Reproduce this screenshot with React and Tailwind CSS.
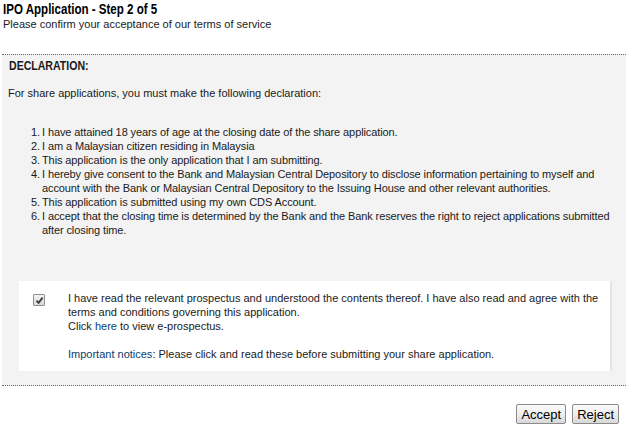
import React from "react";

const items = [
  "I have attained 18 years of age at the closing date of the share application.",
  "I am a Malaysian citizen residing in Malaysia",
  "This application is the only application that I am submitting.",
  "I hereby give consent to the Bank and Malaysian Central Depository to disclose information pertaining to myself and account with the Bank or Malaysian Central Depository to the Issuing House and other relevant authorities.",
  "This application is submitted using my own CDS Account.",
  "I accept that the closing time is determined by the Bank and the Bank reserves the right to reject applications submitted after closing time.",
];

const sans = "font-['Liberation_Sans',Arial,sans-serif]";

function CheckBox() {
  return (
    <div className="w-[12px] h-[12px] border border-[#8f8f8f] rounded-[1px] bg-gradient-to-b from-[#f4f4f4] to-[#d9d9d9] flex items-center justify-center">
      <svg width="9" height="9" viewBox="0 0 9 9">
        <path d="M1.5 4.6 L3.6 6.8 L7.6 1.6" fill="none" stroke="#3a3a3a" strokeWidth="1.8" />
      </svg>
    </div>
  );
}

function Btn({ children }) {
  return (
    <button
      type="button"
      className={`h-[20px] px-[4px] text-[13px] leading-none text-black border border-[#8a8a8a] rounded-[2px] bg-gradient-to-b from-[#fbfbfb] via-[#eeeeee] to-[#d8d8d8] ${sans}`}
    >
      {children}
    </button>
  );
}

export default function App() {
  return (
    <div className={`w-[626px] h-[429px] bg-white text-[#1a1a1a] text-[11px] leading-[14px] ${sans}`}>
      <div className="px-[3px] pt-[1px]">
        {/* narrow bold title */}
        <div className="text-[15px] leading-[15px] font-bold text-black">
          <span className="inline-block origin-left scale-x-[0.77]">IPO Application - Step 2 of 5</span>
        </div>
        <div className="mt-[1px]">Please confirm your acceptance of our terms of service</div>
      </div>

      <div className="mt-[23px] ml-[2px] border-t border-b border-dotted border-[#666] bg-[#f3f3f3] pt-[4px] pb-[14px]">
        <div className="pl-[7px] text-[12px] leading-[14px] font-bold">
          <span className="inline-block origin-left scale-x-[0.88]">DECLARATION:</span>
        </div>
        <div className="pl-[6px] mt-[13px]">
          For share applications, you must make the following declaration:
        </div>

        <ol className="mt-[25px] pl-[29px] pr-[6px] tracking-[-0.1px]">
          {items.map((t, i) => (
            <li key={i} className="flex">
              <span className="w-[11px] shrink-0">{i + 1}.</span>
              <span>{t}</span>
            </li>
          ))}
        </ol>

        <div className="mt-[44px] ml-[17px] w-[591px] bg-white shadow-[2px_0_0_#e4e4e4] pt-[10px] pb-[10px] flex">
          <div className="w-[49px] shrink-0 pl-[14px] pt-[3px]">
            <CheckBox />
          </div>
          <div className="pr-[6px]">
            <div>
              I have read the relevant prospectus and understood the contents thereof. I have also read and agree with the
              terms and conditions governing this application.
            </div>
            <div>
              Click <span className="text-[#0a3d6e] cursor-pointer">here</span> to view e-prospectus.
            </div>
            <div className="mt-[14px]">
              <span className="text-[#0a3d6e] cursor-pointer">Important notices</span>: Please click and read these
              before submitting your share application.
            </div>
          </div>
        </div>
      </div>

      <div className="flex justify-end gap-[6px] pr-[7px] mt-[18px]">
        <Btn>Accept</Btn>
        <Btn>Reject</Btn>
      </div>
    </div>
  );
}
